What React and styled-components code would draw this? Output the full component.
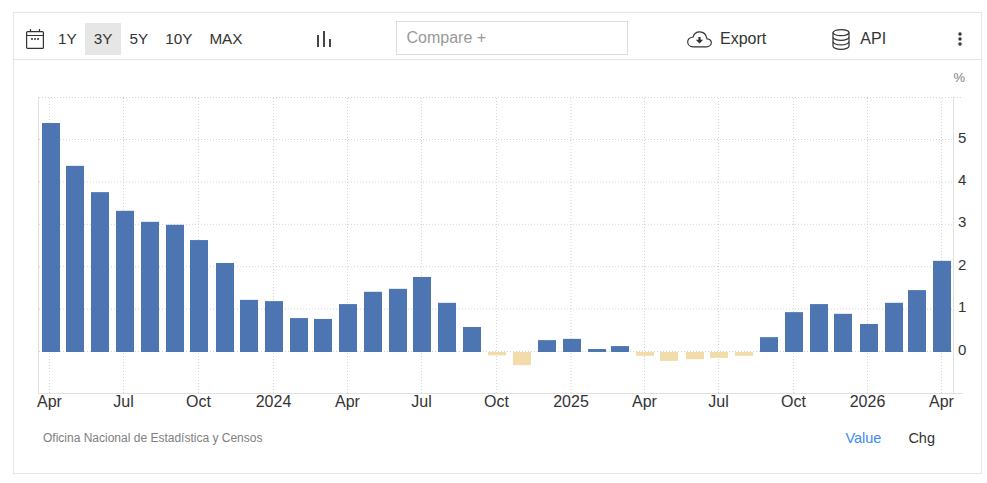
// App.jsx
import React from "react";
import styled, { createGlobalStyle } from "styled-components";

const GlobalStyle = createGlobalStyle`
  html, body {
    margin: 0;
    padding: 0;
    background: #fff;
    font-family: "Liberation Sans", Arial, sans-serif;
  }
`;

const Card = styled.div`
  box-sizing: border-box;
  width: 969px;
  height: 462px;
  margin: 12px 0 0 13px;
  border: 1px solid #e6e6e6;
  display: flex;
  flex-direction: column;
`;

const Toolbar = styled.div`
  box-sizing: border-box;
  height: 47px;
  flex: none;
  display: flex;
  align-items: center;
  padding: 6px 0 0 12px;
  border-bottom: 1px solid #e6e6e6;
  color: #333;
`;

const IconSlot = styled.span`
  display: inline-flex;
  align-items: center;
  margin: ${(p) => p.$margin || "0"};
`;

const RangeButton = styled.button`
  box-sizing: border-box;
  height: 32px;
  padding: 0 8.5px;
  border: none;
  background: ${(p) => (p.$active ? "#e6e6e6" : "transparent")};
  color: #333;
  font: 15.3px "Liberation Sans", Arial, sans-serif;
`;

const CompareBox = styled.div`
  box-sizing: border-box;
  width: 232px;
  height: 34px;
  margin: -2px 0 0 65px;
  padding: 0 10px 1px;
  display: flex;
  align-items: center;
  border: 1px solid #deded6;
  color: #999;
  font-size: 16px;
`;

const ActionLabel = styled.span`
  font-size: 16px;
  color: #333;
  margin-left: ${(p) => p.$left}px;
`;

const Plot = styled.svg`
  display: block;
  flex: none;
  width: 967px;
  height: 350px;
`;

const Footer = styled.div`
  display: flex;
  align-items: center;
  padding: 20px 46px 0 29px;
`;

const Source = styled.span`
  flex: 1;
  font-size: 12px;
  color: #808080;
`;

const Toggle = styled.span`
  font-size: 14.5px;
  color: ${(p) => (p.$active ? "#3d8bf2" : "#333")};
  margin-left: 27px;
`;

const values = [
  5.4, 4.39, 3.77, 3.33, 3.07, 3.0, 2.64, 2.1, 1.23, 1.2, 0.8, 0.78, 1.13, 1.42,
  1.49, 1.77, 1.16, 0.59, -0.08, -0.31, 0.28, 0.31, 0.07, 0.14, -0.09, -0.21,
  -0.17, -0.14, -0.09, 0.35, 0.94, 1.13, 0.9, 0.66, 1.16, 1.46, 2.15,
];

const barX = [
  42, 66, 91, 116, 141, 166, 190, 216, 240, 265, 290, 314, 339, 364, 389, 413,
  438, 463, 488, 513, 538, 563, 588, 611, 636, 660, 686, 710, 735, 760, 785,
  810, 834, 860, 885, 908, 933,
];

const xTicks = [
  [49.5, "Apr"], [123.5, "Jul"], [198.5, "Oct"], [273.5, "2024"], [347.5, "Apr"],
  [421.5, "Jul"], [496.5, "Oct"], [571, "2025"], [644.5, "Apr"], [718.5, "Jul"],
  [793.5, "Oct"], [867.5, "2026"], [941.5, "Apr"],
];

const ZERO = 352;
const UNIT = 42.4;

const CalendarIcon = () => (
  <svg width="18" height="20" viewBox="0 0 18 20" fill="none" stroke="#333" strokeWidth="1.2">
    <rect x="0.6" y="2.6" width="16.8" height="16.8" rx="1" />
    <path d="M0.6 6.5h16.8M4.5 0v3M13.5 0v3" />
    <path d="M5 10h2M8 10h2M11 10h2" strokeWidth="1.5" />
  </svg>
);

const BarsIcon = () => (
  <svg width="14" height="16" viewBox="0 0 14 16" fill="#444">
    <rect x="0" y="4" width="2" height="12" />
    <rect x="6" y="0" width="2" height="16" />
    <rect x="12" y="8" width="2" height="8" />
  </svg>
);

const CloudIcon = () => (
  <svg width="25" height="17" viewBox="0 0 25 17" fill="none" stroke="#333" strokeWidth="1.2">
    <path d="M6 15.8h13.5c2.6 0 4.8-1.8 4.8-4 0-2.1-1.9-3.8-4.3-4C19.2 3.6 16.6 0.8 12.8 0.8 9.4 0.8 6.8 2.9 6.1 6 3 6.4 0.7 8.5 0.7 11c0 2.7 2.3 4.8 5.3 4.8z" />
    <path d="M12.5 6v4" strokeWidth="2.2" />
    <path d="M8.8 8.8h7.4l-3.7 3.8z" fill="#333" stroke="none" />
  </svg>
);

const DatabaseIcon = () => (
  <svg width="18" height="21" viewBox="0 0 18 21" fill="none" stroke="#333" strokeWidth="1.2">
    <ellipse cx="9" cy="3.6" rx="8" ry="3" />
    <path d="M1 3.6v13.6c0 1.7 3.6 3.1 8 3.1s8-1.4 8-3.1V3.6" />
    <path d="M1 8.2c0 1.7 3.6 3.1 8 3.1s8-1.4 8-3.1M1 12.8c0 1.7 3.6 3.1 8 3.1s8-1.4 8-3.1" />
  </svg>
);

const DotsIcon = () => (
  <svg width="4" height="14" viewBox="0 0 4 14" fill="#333">
    <circle cx="2" cy="2" r="1.7" />
    <circle cx="2" cy="7" r="1.7" />
    <circle cx="2" cy="12" r="1.7" />
  </svg>
);

const Chart = () => (
  <Plot viewBox="14 60 967 350">
    <text x="953.5" y="82" fontSize="13" fill="#808080">%</text>

    {[0, 1, 2, 3, 4, 5].map((v) => (
      <line
        key={v}
        x1="39"
        x2="953"
        y1={ZERO - 0.5 - v * UNIT}
        y2={ZERO - 0.5 - v * UNIT}
        stroke="#d4d4d4"
        strokeDasharray="1 2"
      />
    ))}
    <line x1="39" x2="962" y1="97.5" y2="97.5" stroke="#d4d4d4" strokeDasharray="1 2" />
    {xTicks.map(([x, label]) => (
      <line key={x + label} x1={x} x2={x} y1="98" y2="393" stroke="#d4d4d4" strokeDasharray="1 2" />
    ))}

    {values.map((v, i) => (
      <rect
        key={i}
        x={barX[i]}
        y={v >= 0 ? ZERO - v * UNIT : ZERO}
        width="18"
        height={Math.abs(v) * UNIT}
        fill={v >= 0 ? "#4c75b1" : "#f2dcaa"}
      />
    ))}

    <line x1="38.5" x2="38.5" y1="97" y2="393" stroke="#e0e0e0" />
    <line x1="953.5" x2="953.5" y1="97" y2="393" stroke="#e0e0e0" />
    <line x1="38" x2="963" y1="393.5" y2="393.5" stroke="#e0e0e0" />

    {[0, 1, 2, 3, 4, 5].map((v) => (
      <text key={v} x="958" y={ZERO + 2.6 - v * UNIT} fontSize="15" fill="#333">{v}</text>
    ))}
    {xTicks.map(([x, label]) => (
      <text key={x + label} x={x} y="407" fontSize="16" fill="#333" textAnchor="middle">{label}</text>
    ))}
  </Plot>
);

export default function App() {
  return (
    <>
      <GlobalStyle />
      <Card>
        <Toolbar>
          <IconSlot $margin="0 5.5px 0 0"><CalendarIcon /></IconSlot>
          <RangeButton>1Y</RangeButton>
          <RangeButton $active>3Y</RangeButton>
          <RangeButton>5Y</RangeButton>
          <RangeButton>10Y</RangeButton>
          <RangeButton>MAX</RangeButton>
          <IconSlot $margin="0 0 0 65.5px"><BarsIcon /></IconSlot>
          <CompareBox>Compare +</CompareBox>
          <IconSlot $margin="0 0 0 59px"><CloudIcon /></IconSlot>
          <ActionLabel $left={8.5}>Export</ActionLabel>
          <IconSlot $margin="0 0 0 66px"><DatabaseIcon /></IconSlot>
          <ActionLabel $left={10}>API</ActionLabel>
          <IconSlot $margin="0 0 0 72px"><DotsIcon /></IconSlot>
        </Toolbar>
        <Chart />
        <Footer>
          <Source>Oficina Nacional de Estadística y Censos</Source>
          <Toggle $active>Value</Toggle>
          <Toggle>Chg</Toggle>
        </Footer>
      </Card>
    </>
  );
}
